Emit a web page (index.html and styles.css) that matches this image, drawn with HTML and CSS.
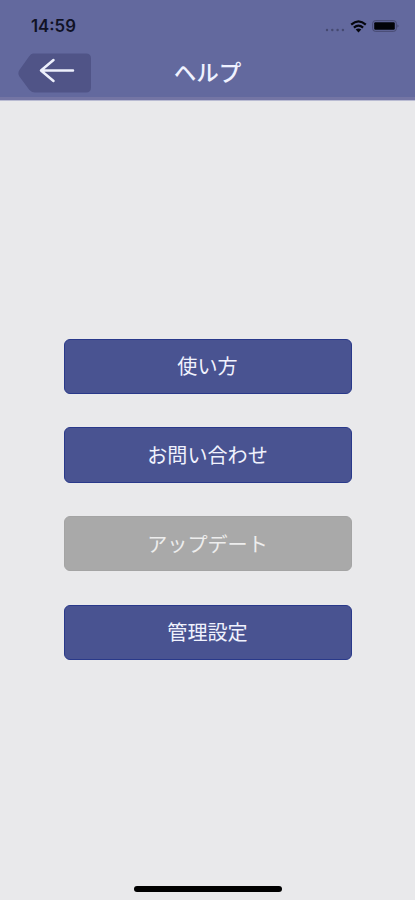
FILE: index.html
```html
<!DOCTYPE html>
<html lang="ja">
<head>
  <meta charset="UTF-8">
  <meta name="viewport" content="width=device-width, initial-scale=1.0">
  <title>ヘルプ</title>
  <link rel="stylesheet" href="styles.css">
</head>
<body>
  <header class="header">
    <div class="status-bar">
      <span class="time">14:59</span>
      <div class="status-icons">
        <svg class="signal" width="20" height="4" viewBox="0 0 20 4">
          <circle cx="2" cy="2" r="1.2"/>
          <circle cx="7.3" cy="2" r="1.2"/>
          <circle cx="12.6" cy="2" r="1.2"/>
          <circle cx="17.9" cy="2" r="1.2"/>
        </svg>
        <svg class="wifi" width="17" height="13" viewBox="0 0 17 13">
          <path d="M1.2 4.6Q8.5 -1.9 15.8 4.6M3.9 7.6Q8.5 3.5 13.1 7.6" fill="none" stroke="#05060d" stroke-width="2.2"/>
          <path d="M5.7 9.6Q8.5 7.3 11.3 9.6L8.5 12.4Z" fill="#05060d"/>
        </svg>
        <svg class="battery" width="28" height="12" viewBox="0 0 28 12">
          <rect x="0.7" y="0.7" width="23.6" height="10.6" rx="2.6" fill="none" stroke="#45486f"/>
          <rect x="2.2" y="2.2" width="20.6" height="7.6" rx="1.2" fill="#020308"/>
          <path d="M25.6 4.2Q27.4 6 25.6 7.8Z" fill="#34375a"/>
        </svg>
      </div>
    </div>
    <div class="nav-bar">
      <button type="button" class="back-button" aria-label="戻る">
        <svg width="73" height="40" viewBox="0 0 73 40">
          <path d="M15 0.5H68Q73 0.5 73 5.5V34.5Q73 39.5 68 39.5H17Q13.5 39.5 11.2 36.8L1.4 23.5Q-0.8 20 1.6 16.8L11 3.5Q13 0.5 15 0.5Z" fill="#505487"/>
          <path d="M55 17.5H23.5M35.5 7L23 17.5L35.5 28" fill="none" stroke="#edf0fc" stroke-width="2.5" stroke-linecap="round" stroke-linejoin="round"/>
        </svg>
      </button>
      <h1 class="title">ヘルプ</h1>
    </div>
  </header>

  <main class="menu">
    <button type="button" class="menu-button">使い方</button>
    <button type="button" class="menu-button">お問い合わせ</button>
    <button type="button" class="menu-button" disabled>アップデート</button>
    <button type="button" class="menu-button">管理設定</button>
  </main>

  <div class="home-indicator"></div>
</body>
</html>
```
FILE: styles.css
```css
* {
  box-sizing: border-box;
}

body {
  margin: 0;
  height: 900px;
  display: flex;
  flex-direction: column;
  align-items: center;
  overflow: hidden;
  background-color: #e9e9eb;
  font-family: "Noto Sans CJK JP", sans-serif;
}

button {
  border: none;
  padding: 0;
  font-family: inherit;
}

svg {
  display: block;
}

/* Header */
.header {
  width: 100%;
  height: 101px;
  background-color: #63699e;
  border-bottom: 1px solid #b9bbd2;
  box-shadow: inset 0 -3px 0 #7475a4;
}

.status-bar {
  height: 53px;
  padding: 0 15px 0 31px;
  display: flex;
  justify-content: space-between;
  align-items: center;
}

.time {
  margin-bottom: 2px;
  color: #101225;
  font-family: Inter, sans-serif;
  font-size: 16.8px;
  font-weight: 600;
  line-height: 20px;
}

.status-icons {
  margin-bottom: 1px;
  display: flex;
  align-items: center;
}

.signal {
  margin: 7px 5px 0 0;
  fill: #454970;
}

.wifi {
  margin-right: 5px;
}

.nav-bar {
  padding: 0 18px;
  display: grid;
  grid-template-columns: 73px 1fr 73px;
}

.back-button {
  height: 40px;
  background: none;
  cursor: pointer;
}

.title {
  margin: 0;
  color: #eff2ff;
  font-size: 22.5px;
  font-weight: 500;
  line-height: 36px;
  text-align: center;
}

/* Menu */
.menu {
  width: 288px;
  margin-top: 237.5px;
  display: flex;
  flex-direction: column;
  gap: 33.2px;
}

.menu-button {
  height: 55.5px;
  border: 1px solid #29398a;
  border-radius: 6px;
  background-color: #495391;
  color: #f0f2fd;
  font-size: 20.1px;
  line-height: 30px;
  cursor: pointer;
}

.menu-button:disabled {
  border-color: #a4a4a4;
  background-color: #a9a9a9;
  color: #ededed;
  cursor: default;
}

.home-indicator {
  width: 148px;
  height: 6px;
  margin-top: auto;
  margin-bottom: 8px;
  border-radius: 3px;
  background-color: #000;
}
```
